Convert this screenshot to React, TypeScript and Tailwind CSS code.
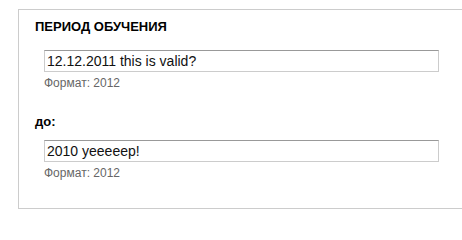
export default function App() {
  const fields = [
    { label: 'ПЕРИОД ОБУЧЕНИЯ', value: '12.12.2011 this is valid?', caps: true },
    { label: 'до:', value: '2010 yeeeeep!', caps: false },
  ]

  return (
    <div className="w-[462px] h-[216px] overflow-hidden bg-white pt-[9px] pl-[18px] font-['Liberation_Sans',Arial,sans-serif]">
      <div className="h-[200px] border border-r-0 border-[#cccccc] pl-4 pt-[9px]">
        {fields.map((field, i) => (
          <div key={i} className={i > 0 ? 'mt-6' : ''}>
            <div className="text-[13px] leading-[15px] font-bold text-black">{field.label}</div>
            <div className="pl-[9px]">
              <input
                type="text"
                readOnly
                value={field.value}
                className={`block w-[395px] h-[22px] border border-[#cccccc] border-t-[#999999] px-[2px] text-[14px] leading-4 text-[#111] outline-none font-['Liberation_Sans',Arial,sans-serif] ${i > 0 ? 'mt-[11px]' : 'mt-4'}`}
              />
              <div className="mt-1 text-[12px] leading-[14px] text-[#666]">Формат: 2012</div>
            </div>
          </div>
        ))}
      </div>
    </div>
  )
}
